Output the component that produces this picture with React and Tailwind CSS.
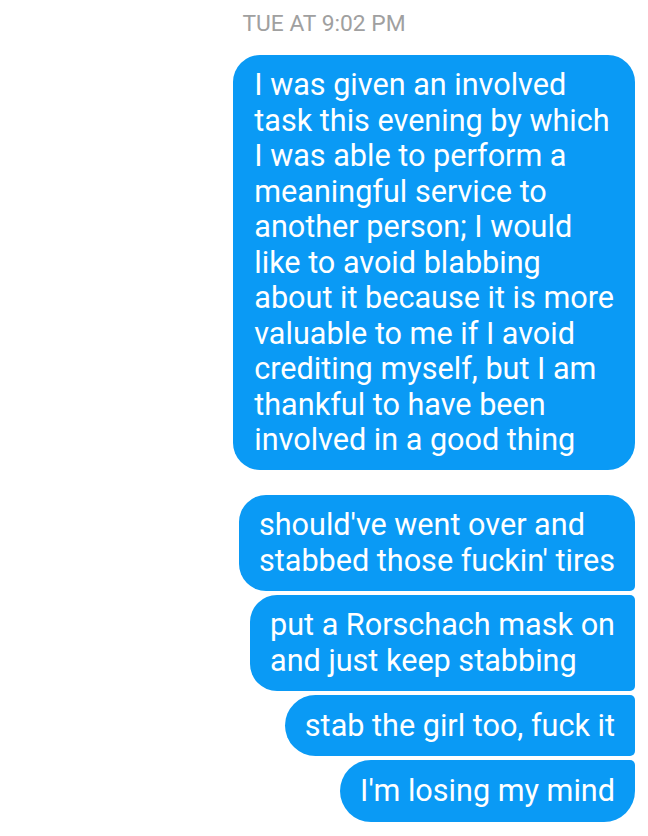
export default function App() {
  const blue = "bg-[#0a9af5]";
  return (
    <div className="w-[648px] h-[836px] bg-white overflow-hidden font-['Roboto',sans-serif]">
      <div className="pt-[11px] text-center text-[22.8px] leading-[26px] text-[#a0a0a0]">TUE AT 9:02 PM</div>
      <div className="flex flex-col items-end pr-[13px] pt-[18px]">
        <div className={`${blue} text-white text-[30.6px] leading-[35.5px] px-[21px] py-[12px] rounded-[27px] whitespace-nowrap`}>
          I was given an involved<br />
          task this evening by which<br />
          I was able to perform a<br />
          meaningful service to<br />
          another person; I would<br />
          like to avoid blabbing<br />
          about it because it is more<br />
          valuable to me if I avoid<br />
          crediting myself, but I am<br />
          thankful to have been<br />
          involved in a good thing
        </div>
        <div className="mt-[25px] flex flex-col items-end gap-[4px]">
          <div className={`${blue} text-white text-[30.6px] leading-[35.5px] px-[20px] py-[12.5px] rounded-[27px] rounded-br-[5px] whitespace-nowrap`}>
            should've went over and<br />
            stabbed those fuckin' tires
          </div>
          <div className={`${blue} text-white text-[30.6px] leading-[35.5px] px-[20px] py-[12.5px] rounded-[27px] rounded-tr-[5px] rounded-br-[5px] whitespace-nowrap`}>
            put a Rorschach mask on<br />
            and just keep stabbing
          </div>
          <div className={`${blue} text-white text-[30.6px] leading-[35.5px] px-[20px] py-[13px] rounded-[31px] rounded-tr-[5px] rounded-br-[5px] whitespace-nowrap`}>
            stab the girl too, fuck it
          </div>
          <div className={`${blue} text-white text-[30.6px] leading-[35.5px] px-[20px] py-[13px] rounded-[31px] rounded-tr-[5px] whitespace-nowrap`}>
            I'm losing my mind
          </div>
        </div>
      </div>
    </div>
  );
}
